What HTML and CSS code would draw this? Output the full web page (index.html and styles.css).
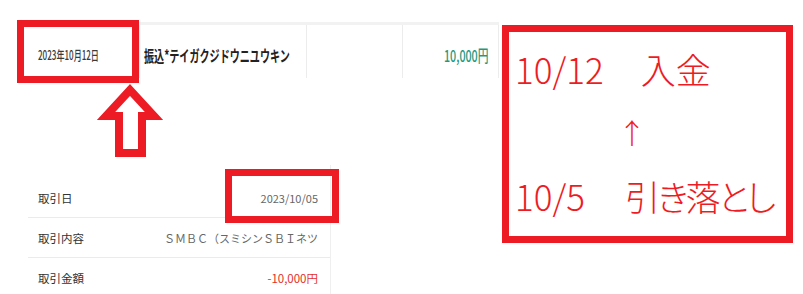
FILE: index.html
```html
<!DOCTYPE html>
<html lang="ja">
<head>
<meta charset="utf-8">
<title>取引明細</title>
<link rel="stylesheet" href="styles.css">
</head>
<body>
<div class="page">
  <div class="history">
    <div class="history-row">
      <div class="cell cell-date"><span class="squeeze">2023年10月12日</span></div>
      <div class="cell cell-desc"><span class="squeeze">振込*テイガクジドウニユウキン</span></div>
      <div class="cell cell-empty"></div>
      <div class="cell cell-amount"><span class="squeeze squeeze-right">10,000円</span></div>
    </div>
  </div>

  <div class="detail">
    <div class="detail-row">
      <span class="detail-label">取引日</span>
      <span class="detail-value">2023/10/05</span>
    </div>
    <div class="detail-row">
      <span class="detail-label">取引内容</span>
      <span class="detail-value">ＳＭＢＣ（スミシンＳＢＩネツ</span>
    </div>
    <div class="detail-row">
      <span class="detail-label">取引金額</span>
      <span class="detail-value detail-minus">-10,000円</span>
    </div>
  </div>

  <div class="mark mark-date"></div>
  <svg class="mark-arrow" width="803" height="294" viewBox="0 0 803 294">
    <polygon points="130,90 154,116 142,116 142,153 119,153 119,116 106,116" fill="#fff" stroke="#ed1c24" stroke-width="8" stroke-linejoin="miter"/>
  </svg>
  <div class="mark mark-trade"></div>

  <div class="note">
    <div class="note-line">10/12　<span class="note-word note-word-in">入金</span></div>
    <div class="note-arrow">↑</div>
    <div class="note-line">10/5　<span class="note-word note-kana">引き落とし</span></div>
  </div>
</div>
</body>
</html>
```

FILE: styles.css
```css
html, body {
  margin: 0;
  padding: 0;
  background: #fff;
}

.page {
  position: relative;
  width: 803px;
  height: 294px;
  overflow: hidden;
  font-family: "Noto Sans CJK JP", "Noto Sans", sans-serif;
  color: #333;
}

/* top history table */
.history {
  padding-top: 22px;
  margin-left: 20px;
  width: 479px;
}

.history-row {
  display: flex;
  height: 56px;
  border-top: 3px solid #f2f2f2;
  box-sizing: border-box;
}

.cell {
  display: flex;
  align-items: center;
  padding-top: 6px;
  box-sizing: border-box;
  border-right: 1px solid #ececec;
  white-space: nowrap;
}

.cell-date {
  width: 120px;
  padding-left: 18px;
  font-size: 13px;
  font-weight: 500;
  color: #3a3a3a;
}

.cell-date .squeeze {
  transform: scaleX(0.62);
}

.cell-desc {
  width: 167px;
  padding-left: 4px;
  font-size: 15.5px;
  font-weight: bold;
  color: #222;
}

.cell-empty {
  width: 96px;
}

.cell-amount {
  width: 96px;
  justify-content: flex-end;
  padding-right: 10px;
  font-size: 16.5px;
  font-weight: 500;
  color: #1f9a80;
}

.squeeze {
  display: inline-block;
  transform: scaleX(0.65);
  transform-origin: left center;
}

.squeeze-right {
  transform-origin: right center;
  margin-left: -40px;
}

/* detail panel */
.detail {
  margin-top: 87px;
  margin-left: 28px;
  width: 302px;
  padding-top: 13px;
  border-right: 1px solid #efefef;
  font-size: 11.5px;
}

.detail-row {
  display: flex;
  justify-content: space-between;
  align-items: center;
  height: 39px;
  padding: 0 12px 0 10px;
  border-bottom: 1px solid #ebebeb;
  white-space: nowrap;
}

.detail-label {
  color: #333;
}

.detail-value {
  color: #666;
  font-size: 11px;
}

.detail-minus {
  color: #e2302b;
  font-size: 11.5px;
}

/* red annotations */
.mark {
  position: absolute;
  box-sizing: border-box;
  border: 7px solid #ed1c24;
}

.mark-date {
  left: 17px;
  top: 20px;
  width: 122px;
  height: 63px;
}

.mark-trade {
  left: 225px;
  top: 169px;
  width: 114px;
  height: 54px;
}

.mark-arrow {
  position: absolute;
  left: 0;
  top: 0;
}

.note {
  position: absolute;
  left: 502px;
  top: 25px;
  width: 291px;
  height: 218px;
  box-sizing: border-box;
  border: 7px solid #ed1c24;
  padding: 5px 0 0 6px;
  display: flex;
  flex-direction: column;
  color: #ed1c24;
  background: #fff;
}

.note-line {
  font-size: 35px;
  font-weight: 300;
  line-height: 64px;
  height: 64px;
  white-space: nowrap;
}

.note-word-in {
  margin-left: 2px;
}

.note-kana {
  margin-left: 5px;
  font-feature-settings: "palt";
  letter-spacing: -2.5px;
}

.note-arrow {
  font-size: 28px;
  font-weight: 300;
  line-height: 63px;
  height: 63px;
  padding-left: 103px;
}
```
